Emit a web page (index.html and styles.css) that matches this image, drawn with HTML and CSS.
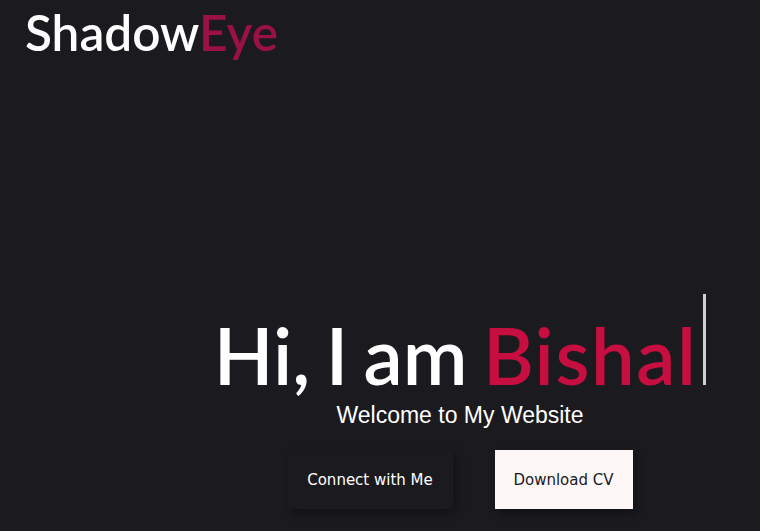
FILE: index.html
```html
<!DOCTYPE html>
<html lang="en">
<head>
<meta charset="utf-8">
<title>ShadowEye</title>
<link rel="stylesheet" href="styles.css">
</head>
<body>
<header class="topbar">
  <a class="logo" href="#">Shadow<span class="logo-accent">Eye</span></a>
</header>
<main class="hero">
  <h1 class="hero-title">Hi, I am <span class="name">Bishal</span><span class="cursor"></span></h1>
  <p class="hero-sub">Welcome to My Website</p>
  <div class="actions">
    <a class="btn btn-dark" href="#">Connect with Me</a>
    <a class="btn btn-light" href="#">Download CV</a>
  </div>
</main>
</body>
</html>
```
FILE: styles.css
```css
html, body {
  margin: 0;
  padding: 0;
}
body {
  background: #1b1a1f;
  color: #ffffff;
  width: 760px;
  height: 531px;
  overflow: hidden;
  font-family: "Lato", "Liberation Sans", sans-serif;
}
.topbar {
  padding: 2px 0 0 25px;
  height: 65px;
}
.logo {
  font-family: "Lato", sans-serif;
  font-size: 49.5px;
  font-weight: 600;
  color: #ffffff;
  text-decoration: none;
  line-height: 60px;
}
.logo-accent {
  color: #9a1146;
}
.hero {
  display: flex;
  flex-direction: column;
  align-items: center;
  padding: 242px 0 0 160px;
}
.hero-title {
  margin: 0;
  font-family: "Lato", sans-serif;
  font-weight: 600;
  font-size: 78px;
  line-height: 93px;
  white-space: nowrap;
  word-spacing: -4px;
}
.name {
  color: #c60f40;
  letter-spacing: 1.5px;
}
.cursor {
  display: inline-block;
  width: 3px;
  height: 91px;
  margin-top: -40px;
  background: #d0d0d0;
  margin-left: 6px;
  vertical-align: 0;
}
.hero-sub {
  margin: 0;
  font-family: "Liberation Sans", Arial, sans-serif;
  font-size: 23px;
  line-height: 26px;
}
.actions {
  display: flex;
  gap: 42px;
  margin-top: 22px;
}
.btn {
  display: flex;
  align-items: center;
  justify-content: center;
  height: 59px;
  font-family: "DejaVu Sans", sans-serif;
  font-size: 15px;
  text-decoration: none;
  box-shadow: 3px 4px 8px rgba(0,0,0,0.35);
}
.btn-dark {
  background: #1b1a1f;
  color: #ffffff;
  width: 165px;
}
.btn-light {
  background: #fdf7f7;
  color: #1b1a1f;
  width: 138px;
}
```
